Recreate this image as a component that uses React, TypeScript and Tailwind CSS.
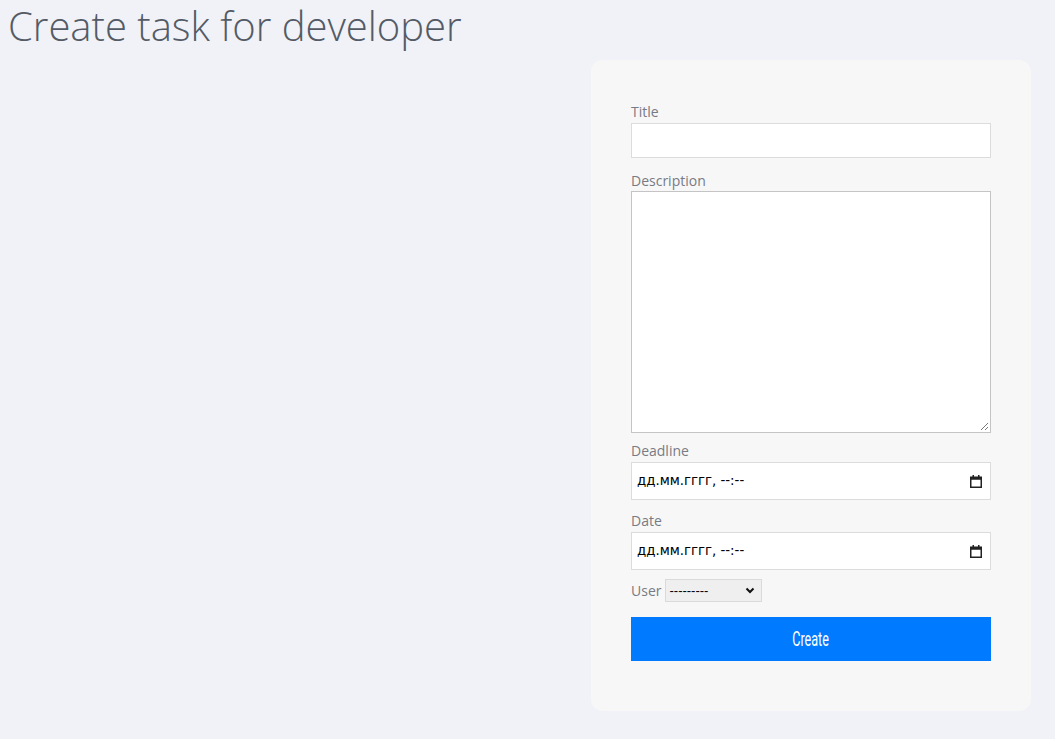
import React from "react";

function Cal() {
  return (
    <svg width="12" height="13" viewBox="0 0 12 13" className="block">
      <rect x="0.75" y="2.25" width="10.5" height="10" fill="none" stroke="#222" strokeWidth="1.5" />
      <rect x="0.75" y="2.25" width="10.5" height="2.5" fill="#222" />
      <rect x="2.5" y="0" width="1.5" height="2.5" fill="#222" />
      <rect x="8" y="0" width="1.5" height="2.5" fill="#222" />
    </svg>
  );
}

function DateField() {
  return (
    <div className="w-[360px] h-[38px] bg-white border border-[#dcdcdc] flex items-center justify-between pl-[5px] pr-[8px]">
      <span className="text-[13.33px] text-black" style={{ fontFamily: '"DejaVu Sans", sans-serif' }}>
        дд.мм.гггг, --:--
      </span>
      <Cal />
    </div>
  );
}

export default function App() {
  return (
    <div
      className="min-h-[739px] bg-[#f0f2f7] overflow-hidden"
      style={{ fontFamily: '"Open Sans", sans-serif' }}
    >
      <h1 className="text-[40px] font-light text-[#545b66] leading-[52px] pl-[8px] pt-[0px] m-0">
        Create task for developer
      </h1>
      <div className="flex justify-end pr-[24px] mt-[8px]">
        <div className="w-[440px] bg-[#f7f7f7] rounded-[12px] pt-[42px] pb-[50px] px-[40px]">
          <div className="text-[14px] leading-[20px] text-[#777b84]">Title</div>
          <div className="w-[360px] h-[35px] bg-white border border-[#dcdcdc] mt-[1px]" />
          <div className="text-[14px] leading-[20px] text-[#777b84] mt-[13px]">Description</div>
          <div className="w-[360px] h-[242px] bg-white border border-[#c4c4c4] relative">
            <svg width="9" height="9" viewBox="0 0 9 9" className="absolute right-[1px] bottom-[1px]">
              <line x1="8" y1="1" x2="1" y2="8" stroke="#777" strokeWidth="1" />
              <line x1="8" y1="5" x2="5" y2="8" stroke="#777" strokeWidth="1" />
            </svg>
          </div>
          <div className="text-[14px] leading-[20px] text-[#777b84] mt-[8px]">Deadline</div>
          <div className="mt-[1px]"><DateField /></div>
          <div className="text-[14px] leading-[20px] text-[#777b84] mt-[11px]">Date</div>
          <div className="mt-[1px]"><DateField /></div>
          <div className="flex items-center mt-[9px] h-[23px]">
            <span className="text-[14px] text-[#777b84] mr-[4px]">User</span>
            <div className="w-[97px] h-[23px] bg-[#efefef] border border-[#dadada] flex items-center justify-between pl-[3px] pr-[6px]">
              <span className="text-[13px] text-black leading-none" style={{ fontFamily: '"Liberation Sans", sans-serif' }}>
                ---------
              </span>
              <svg width="10" height="7" viewBox="0 0 10 7">
                <path d="M1.5 1.5 L5 5 L8.5 1.5" fill="none" stroke="#111" strokeWidth="2" />
              </svg>
            </div>
          </div>
          <button className="w-[360px] h-[44px] bg-[#007bff] text-white mt-[15px] flex items-center justify-center">
            <span
              className="inline-block text-[21px] leading-none scale-x-[0.6]"
              style={{ fontFamily: 'Roboto, sans-serif' }}
            >
              Create
            </span>
          </button>
        </div>
      </div>
    </div>
  );
}
